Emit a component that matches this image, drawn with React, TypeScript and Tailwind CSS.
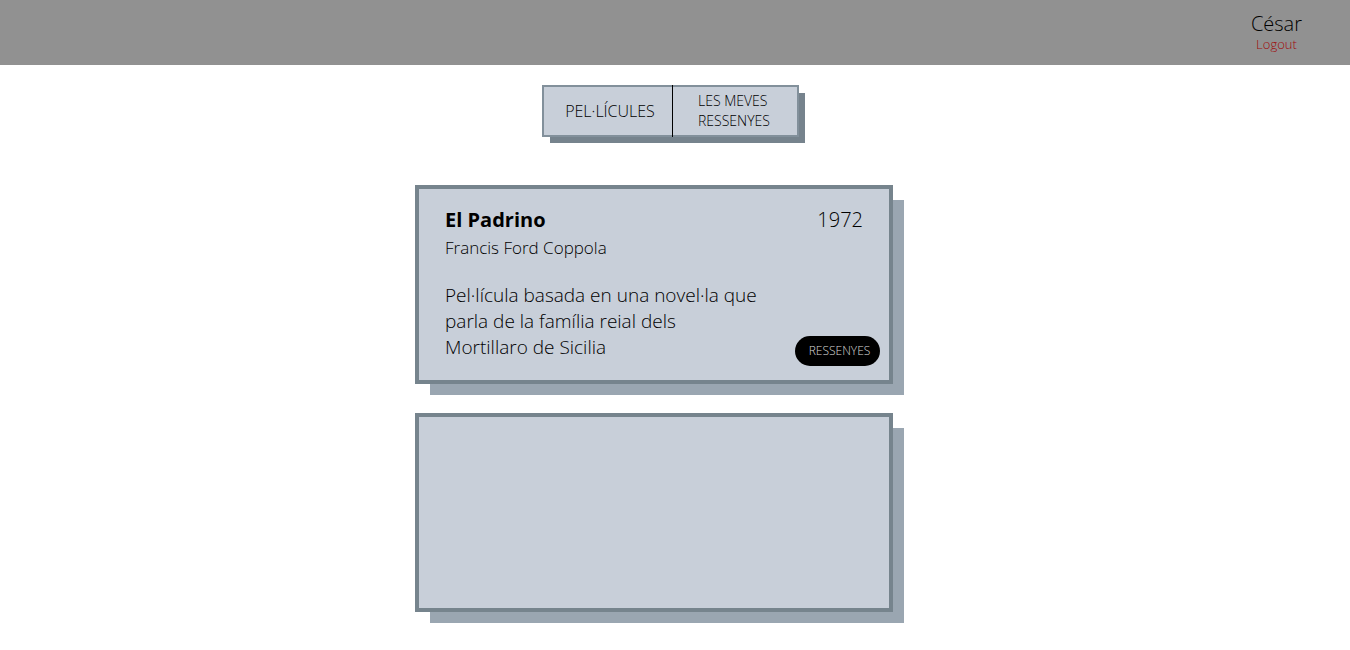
import type { ReactNode } from 'react';

type Film = {
  title: string;
  director: string;
  year: number;
  synopsis: string;
};

const film: Film = {
  title: 'El Padrino',
  director: 'Francis Ford Coppola',
  year: 1972,
  synopsis: 'Pel·lícula basada en una novel·la que parla de la família reial dels Mortillaro de Sicilia',
};

function Header() {
  return (
    <header className="flex h-[65px] flex-col items-end bg-[#919191] pt-3 pr-12">
      <div className="flex flex-col items-center">
        <span className="text-[20px] leading-6">César</span>
        <a href="#logout" className="text-[13px] leading-4 text-[#a00c0c]">
          Logout
        </a>
      </div>
    </header>
  );
}

function Tabs() {
  return (
    <nav className="flex h-[52px] w-[257px] border-2 border-[#82909b] bg-[#c8cfd9] shadow-[7px_7px_0_-1px_#76838d]">
      <a href="#pellicules" className="-my-0.5 flex w-[129px] items-center justify-center border-r border-black pl-1 text-[16px]">
        PEL·LÍCULES
      </a>
      <a href="#ressenyes" className="flex flex-1 items-center pl-[25px] text-[14px] leading-5">
        LES MEVES RESSENYES
      </a>
    </nav>
  );
}

function Card({ children }: { children?: ReactNode }) {
  return (
    <article className="h-[199px] w-[478px] border-4 border-[#76848d] bg-[#c8cfd9] shadow-[13px_13px_0_-2px_#9aa6b1]">
      {children}
    </article>
  );
}

function FilmCard({ title, director, year, synopsis }: Film) {
  return (
    <Card>
      <div className="flex h-full flex-col pt-[17px] pr-[9px] pb-[14px] pl-[26px]">
        <div className="flex justify-between pr-[17px] text-[20px] leading-7">
          <h2 className="font-bold">{title}</h2>
          <span>{year}</span>
        </div>
        <p className="text-[17px] leading-7">{director}</p>
        <div className="flex flex-1 items-end justify-between">
          <p className="mb-1.5 w-[315px] text-[19px] leading-[26px]">{synopsis}</p>
          <button type="button" className="h-[30px] w-[85px] rounded-full bg-black pl-1 text-[12px] text-[#d8d8d8]">
            RESSENYES
          </button>
        </div>
      </div>
    </Card>
  );
}

export default function App() {
  return (
    <div className="min-h-screen bg-white font-['Open_Sans',sans-serif] font-light text-black">
      <Header />
      <div className="flex justify-center pt-5 pr-[9px]">
        <Tabs />
      </div>
      <main className="flex flex-col items-center gap-[29px] pt-12 pr-[42px] pb-9">
        <FilmCard {...film} />
        <Card />
      </main>
    </div>
  );
}
